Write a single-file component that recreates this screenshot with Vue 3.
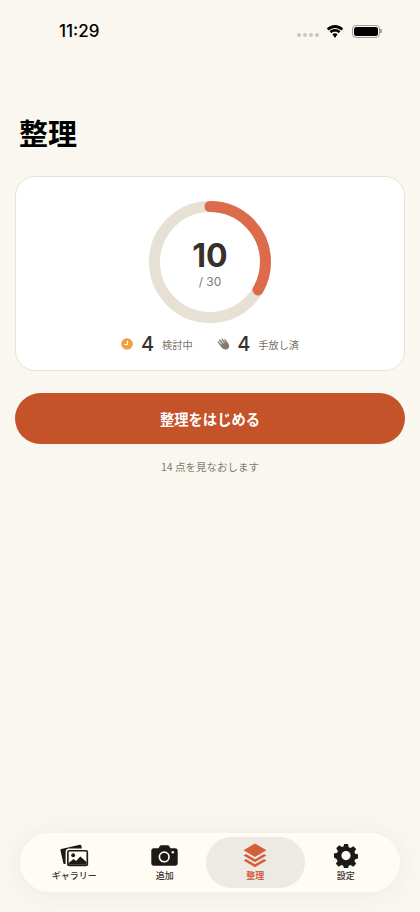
<script setup>
const circumference = 2 * Math.PI * 55.5
const progress = 10 / 30
const dash = `${circumference * progress} ${circumference}`
</script>

<template>
  <div class="screen">
    <div class="status">
      <span class="time">11:29</span>
      <div class="status-right">
        <div class="dots"><i></i><i></i><i></i><i></i></div>
        <svg class="wifi" viewBox="0 0 18 13" width="18" height="13">
          <path d="M9 3c2.400 0 4.600.9 6.300 2.500l1.900-2C15 1.300 12.100 0 9 0S3 1.300.8 3.500l1.900 2C4.400 3.900 6.600 3 9 3z" fill="#000"/>
          <path d="M9 6.800c1.400 0 2.700.5 3.600 1.400l1.800-1.900C13 4.900 11.100 4.100 9 4.100s-4 .8-5.400 2.200l1.800 1.900C6.300 7.300 7.600 6.800 9 6.800z" fill="#000"/>
          <path d="M9 8.200c-1 0-1.900.4-2.600 1L9 13l2.600-3.800C10.900 8.600 10 8.200 9 8.200z" fill="#000"/>
        </svg>
        <div class="battery"><div class="battery-fill"></div></div>
      </div>
    </div>

    <h1 class="title">整理</h1>

    <section class="card">
      <div class="ring">
        <svg viewBox="0 0 122 122" width="122" height="122">
          <circle cx="61" cy="61" r="55.5" fill="none" stroke="#E7E0D5" stroke-width="11"/>
          <circle cx="61" cy="61" r="55.500" fill="none" stroke="#DC6B4C" stroke-width="11" stroke-linecap="round" :stroke-dasharray="dash" transform="rotate(-90 61 61)"/>
        </svg>
        <div class="ring-label">
          <span class="big">10</span>
          <span class="of">/ 30</span>
        </div>
      </div>
      <div class="stats">
        <div class="stat">
          <svg class="clock" viewBox="0 0 12 12" width="12" height="12">
            <circle cx="6" cy="6" r="5.800" fill="#F2A03D"/>
            <path d="M6.500 2.800v3.700H3.400" fill="none" stroke="#fff" stroke-width="1.100"/>
          </svg>
          <b>4</b>
          <span>検討中</span>
        </div>
        <div class="stat">
          <svg class="hands" viewBox="0 0 14 13" width="13" height="12">
            <g fill="none" stroke="#857A6F" stroke-width="1.600" stroke-linecap="round">
              <path d="M1.500 4.500l4 5"/>
              <path d="M3 2.500l5 6"/>
              <path d="M5.500 1.500l4.500 6"/>
              <path d="M8.500 2l3.500 5"/>
            </g>
            <path d="M3.500 7.500L6 11.500c1.500 1.300 5 1.200 6.500-.5l.8-3-3.500-3.500z" fill="#857A6F"/>
          </svg>
          <b class="second">4</b>
          <span>手放し済</span>
        </div>
      </div>
    </section>

    <button class="cta">整理をはじめる</button>
    <p class="hint">14 点を見なおします</p>

    <nav class="tabs">
      <div class="tab">
        <svg viewBox="0 0 30 24" width="29" height="25">
          <path d="M1.300 5.300L20.500.800c.7-.1 1.300.2 1.500.9l.6 3H9.300C7 4.700 5.800 6 5.800 8.200v12.300l-.9.200c-.8.100-1.300-.2-1.500-1L.5 6.700c-.2-.7.100-1.200.8-1.400z" fill="#1C1A17"/>
          <rect x="7.300" y="6.200" width="21.800" height="17" rx="2.200" fill="#1C1A17"/>
          <rect x="9" y="7.900" width="18.400" height="13.600" rx=".8" fill="#FFFCF6"/>
          <circle cx="13.600" cy="11.700" r="2" fill="#1C1A17"/>
          <path d="M9 21.500v-1.800l5-4 2.700 1.900 4.300-4.600 6.400 5.600v2.900z" fill="#1C1A17"/>
        </svg>
        <span>ギャラリー</span>
      </div>
      <div class="tab">
        <svg viewBox="0 0 28 22" width="27" height="25">
          <path d="M2.800 3.500h5l1.500-2.500c.3-.5.700-.7 1.300-.7h6.800c.6 0 1 .2 1.300.7l1.500 2.500h5c1.500 0 2.500 1 2.500 2.500V19c0 1.500-1 2.500-2.500 2.500H2.800C1.300 21.500.3 20.500.3 19V6c0-1.500 1-2.500 2.500-2.500z" fill="#1C1A17"/>
          <circle cx="13.700" cy="12.500" r="5" fill="none" stroke="#FFFCF6" stroke-width="1.700"/>
          <circle cx="22.600" cy="7.700" r="1.300" fill="#FFFCF6"/>
        </svg>
        <span>追加</span>
      </div>
      <div class="tab active">
        <svg viewBox="0 0 24 25" width="24" height="25">
          <path d="M12 .5l11.500 6.700L12 14 .5 7.200z" fill="#D2603D"/>
          <path d="M3 11l9 5.300L21 11l2.500 1.500L12 19.300.5 12.500z" fill="#D2603D"/>
          <path d="M3 16l9 5.300L21 16l2.500 1.500L12 24.300.5 17.500z" fill="#D2603D"/>
        </svg>
        <span>整理</span>
      </div>
      <div class="tab">
        <svg viewBox="0 0 24 24" width="24" height="25">
          <path fill-rule="evenodd" fill="#1C1A17" d="M10 .5h4l.7 3.200 1.800.8 2.800-1.800 2.900 2.900-1.800 2.800.8 1.800 3.200.7v4.100l-3.200.7-.8 1.800 1.800 2.800-2.900 2.900-2.800-1.800-1.800.8-.7 3.200h-4l-.7-3.200-1.800-.8-2.800 1.800-2.900-2.900 1.800-2.800-.8-1.800L0 14.100V10l3.200-.7.800-1.800-1.800-2.800 2.900-2.900 2.800 1.800 1.800-.8zM12 7.500a4.600 4.600 0 1 0 0 9.200 4.600 4.600 0 0 0 0-9.200z"/>
        </svg>
        <span>設定</span>
      </div>
    </nav>
  </div>
</template>

<style scoped>
.screen {
  width: 420px;
  height: 912px;
  box-sizing: border-box;
  background: #FAF7F0;
  display: flex;
  flex-direction: column;
  padding: 0 15px 20px;
  font-family: Inter, "Noto Sans CJK JP", sans-serif;
  color: #38302A;
  overflow: hidden;
}
.status {
  height: 62px;
  flex: none;
  display: flex;
  justify-content: space-between;
  align-items: center;
  padding: 0 25.500px 0 44px;
  box-sizing: border-box;
}
.time {
  font-size: 17px;
  font-weight: 500;
  color: #000;
}
.status-right {
  display: flex;
  align-items: center;
}
.dots {
  display: flex;
  gap: 2px;
  margin-top: 8px;
  margin-right: 7px;
}
.dots i {
  width: 4px;
  height: 4px;
  border-radius: 50%;
  background: #C9C7C3;
}
.wifi {
  margin-right: 8px;
}
.battery {
  width: 27.500px;
  height: 13px;
  box-sizing: border-box;
  border: 1px solid #A29F9A;
  border-radius: 4px;
  padding: 1px;
  position: relative;
}
.battery::after {
  content: "";
  position: absolute;
  right: -3px;
  top: 3px;
  width: 1.500px;
  height: 4px;
  border-radius: 0 1px 1px 0;
  background: #A29F9A;
}
.battery-fill {
  height: 100%;
  border-radius: 2.500px;
  background: #000;
}
.title {
  margin: 48px 0 0 4px;
  height: 44px;
  line-height: 44px;
  font-size: 29px;
  font-weight: 700;
  color: #000;
  font-family: "Noto Sans CJK JP", sans-serif;
  flex: none;
}
.card {
  margin-top: 22px;
  flex: none;
  height: 195px;
  box-sizing: border-box;
  background: #fff;
  border: 1px solid #E9E2D7;
  border-radius: 20px;
  display: flex;
  flex-direction: column;
  align-items: center;
  padding-top: 23.500px;
}
.ring {
  position: relative;
  width: 122px;
  height: 122px;
}
.ring svg {
  display: block;
}
.ring-label {
  position: absolute;
  inset: 0;
  display: flex;
  flex-direction: column;
  align-items: center;
  justify-content: center;
  padding-top: 4px;
  box-sizing: border-box;
}
.big {
  font-size: 32px;
  line-height: 36px;
  font-weight: 700;
}
.of {
  font-size: 12px;
  line-height: 16px;
  color: #857A6F;
  font-weight: 400;
}
.stats {
  display: flex;
  gap: 24px;
  margin-top: 9.500px;
  align-items: center;
  height: 24px;
}
.stat {
  display: flex;
  align-items: center;
}
.clock {
  margin-right: 8px;
}
.hands {
  margin-right: 7.500px;
}
.stat b {
  font-size: 20px;
  font-weight: 500;
  line-height: 24px;
  margin-right: 8px;
}
.stat b.second {
  margin-right: 8px;
}
.stat span {
  font-size: 10.200px;
  color: #7C7166;
  font-family: "Noto Sans CJK JP", sans-serif;
}
.cta {
  margin-top: 22px;
  height: 51px;
  flex: none;
  border: none;
  border-radius: 26px;
  background: #C4532A;
  color: #fff;
  font-size: 14.300px;
  font-weight: 700;
  font-family: "Noto Sans CJK JP", sans-serif;
}
.hint {
  margin: 14.500px 0 0;
  text-align: center;
  font-size: 10.500px;
  line-height: 16px;
  color: #857A6F;
  font-family: "Noto Sans CJK JP", sans-serif;
}
.tabs {
  margin: auto 5px 0;
  height: 59px;
  flex: none;
  box-sizing: border-box;
  padding: 4px 9px;
  background: #FFFCF6;
  border-radius: 30px;
  box-shadow: 0 2px 24px rgba(60, 50, 40, 0.07);
  display: grid;
  grid-template-columns: repeat(4, 1fr);
}
.tab {
  border-radius: 26px;
  display: flex;
  flex-direction: column;
  align-items: center;
  gap: 2px;
  height: 51px;
  padding-top: 6px;
  box-sizing: border-box;
  color: #38302A;
}
.tab svg {
  display: block;
}
.tab span {
  font-size: 9px;
  line-height: 12px;
  font-weight: 500;
  font-family: "Noto Sans CJK JP", sans-serif;
}
.active {
  background: #EDEAE4;
  margin: 0 -4.500px;
}
.active span {
  color: #D2603D;
  font-weight: 700;
}
</style>
